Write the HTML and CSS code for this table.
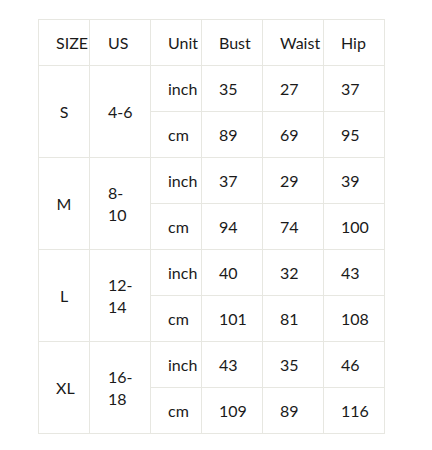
FILE: index.html
```html
<!DOCTYPE html>
<html lang="en">
<head>
<meta charset="utf-8">
<title>Size chart</title>
<link rel="stylesheet" href="styles.css">
</head>
<body>
<table class="size-chart">
  <colgroup>
    <col class="c-size"><col class="c-us"><col class="c-unit"><col class="c-num"><col class="c-num"><col class="c-num">
  </colgroup>
  <thead>
    <tr><th class="size">SIZE</th><th class="us">US</th><th>Unit</th><th>Bust</th><th>Waist</th><th>Hip</th></tr>
  </thead>
  <tbody>
    <tr><td class="size" rowspan="2">S</td><td class="us" rowspan="2">4-6</td><td>inch</td><td>35</td><td>27</td><td>37</td></tr>
    <tr><td>cm</td><td>89</td><td>69</td><td>95</td></tr>
    <tr><td class="size" rowspan="2">M</td><td class="us" rowspan="2">8-<wbr>10</td><td>inch</td><td>37</td><td>29</td><td>39</td></tr>
    <tr><td>cm</td><td>94</td><td>74</td><td>100</td></tr>
    <tr><td class="size" rowspan="2">L</td><td class="us" rowspan="2">12-<wbr>14</td><td>inch</td><td>40</td><td>32</td><td>43</td></tr>
    <tr><td>cm</td><td>101</td><td>81</td><td>108</td></tr>
    <tr><td class="size" rowspan="2">XL</td><td class="us" rowspan="2">16-<wbr>18</td><td>inch</td><td>43</td><td>35</td><td>46</td></tr>
    <tr><td>cm</td><td>109</td><td>89</td><td>116</td></tr>
  </tbody>
</table>
</body>
</html>
```
FILE: styles.css
```css
html, body {
  margin: 0;
  background: #ffffff;
}
body {
  padding: 19px 0 0 38px;
  font-family: "Lato", "Noto Sans", sans-serif;
  font-size: 16px;
  color: #1a1a1a;
}
.size-chart {
  border-collapse: collapse;
  table-layout: fixed;
  width: 347px;
}
.c-size { width: 51px; }
.c-us { width: 61px; }
.c-unit { width: 51px; }
.c-num { width: 61px; }
.size-chart th,
.size-chart td {
  border: 1px solid #e7e7e1;
  height: 45px;
  padding: 0 17px;
  text-align: left;
  vertical-align: middle;
  font-weight: normal;
  line-height: 22px;
  white-space: normal;
}
.size-chart .size {
  text-align: center;
}
.size-chart .us {
  padding-left: 18px;
  padding-right: 10px;
}
```
